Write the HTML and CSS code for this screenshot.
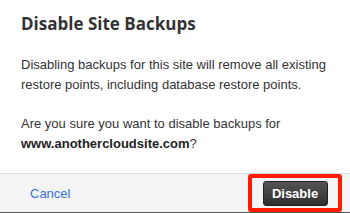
FILE: index.html
```html
<!DOCTYPE html>
<html>
<head>
    <meta charset="utf-8">
    <title>Disable Site Backups</title>
    <link rel="stylesheet" href="styles.css">
</head>
<body>
    <div class="modal">
        <div class="content">
            <h1 class="title">Disable Site Backups</h1>
            <p>Disabling backups for this site will remove all existing restore points, including database restore points.</p>
            <p>Are you sure you want to disable backups for <strong>www.anothercloudsite.com</strong>?</p>
        </div>
        <div class="footer">
            <a href="#" class="cancel">Cancel</a>
            <span class="highlight">
                <button class="disable">Disable</button>
            </span>
        </div>
    </div>
</body>
</html>
```
FILE: styles.css
```css
html, body {
    margin: 0;
    padding: 0;
}

body {
    background: #555;
    width: 350px;
    height: 213px;
    overflow: hidden;
}

.modal {
    background: white;
    height: 211px;
    display: flex;
    flex-direction: column;
}

.content {
    flex: 1;
    padding: 13px 21px 0 21px;
    font-family: "Liberation Sans", Arial, sans-serif;
    font-size: 13px;
    line-height: 20px;
    color: #333;
}

.title {
    font-family: "Open Sans", "Noto Sans", sans-serif;
    font-weight: 700;
    font-size: 17px;
    line-height: 22px;
    color: #333;
    margin: 0 0 20px 0;
}

.content p {
    margin: 0 0 19px 0;
}

.content strong {
    color: #222;
}

.footer {
    height: 43px;
    border-top: 1px solid #dcdcdc;
    background: #f4f4f4;
    display: flex;
    align-items: center;
    justify-content: space-between;
    padding: 0 8px 0 30px;
    font-family: "Liberation Sans", Arial, sans-serif;
    font-size: 13px;
}

.cancel {
    color: #3a72d4;
    text-decoration: none;
}

.highlight {
    display: flex;
    align-items: center;
    justify-content: center;
    width: 86px;
    height: 30px;
    border: 4px solid #ff1a00;
    border-radius: 3px;
}

.disable {
    width: 65px;
    height: 25px;
    border: 1px solid #222;
    border-radius: 3px;
    background: linear-gradient(#555, #2e2e2e);
    color: white;
    font-family: "Liberation Sans", Arial, sans-serif;
    font-weight: 700;
    font-size: 13px;
    padding: 0;
}
```
